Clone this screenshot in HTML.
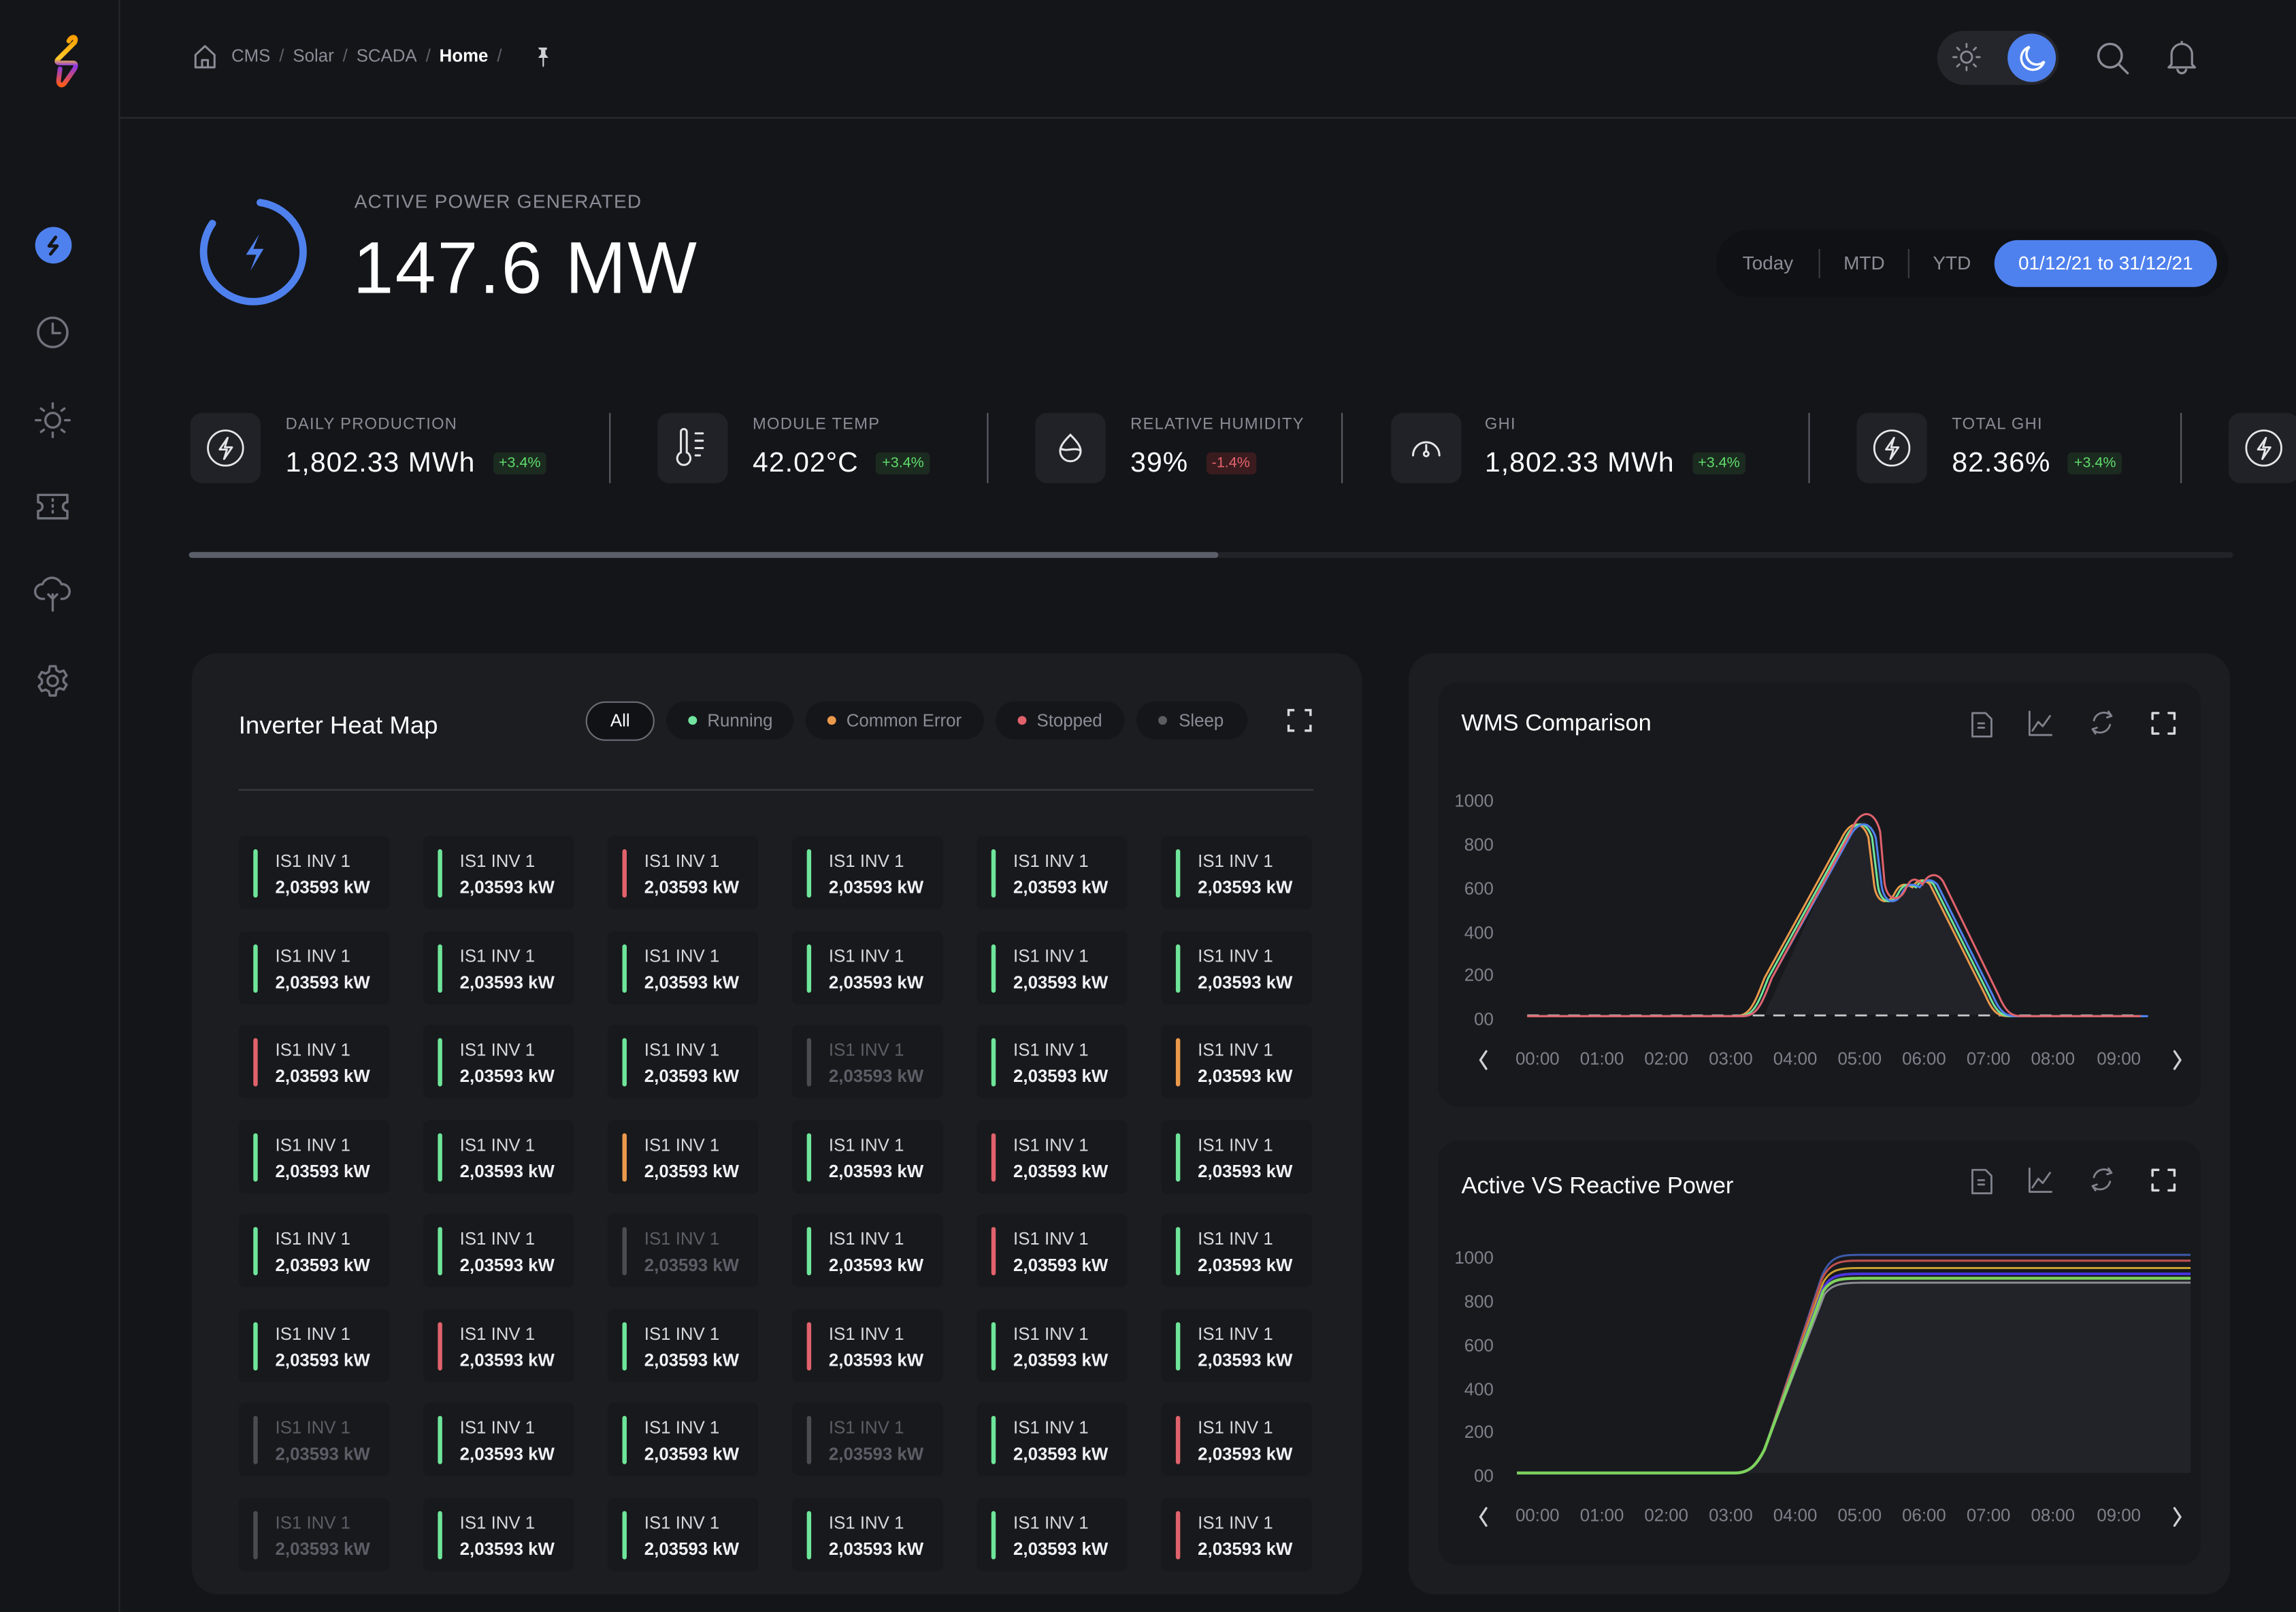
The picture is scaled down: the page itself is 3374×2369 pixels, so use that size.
<!DOCTYPE html>
<html><head><meta charset="utf-8">
<style>
*{margin:0;padding:0;box-sizing:border-box}
html,body{width:3374px;height:2369px;background:#141519;overflow:hidden}
#s{position:absolute;left:0;top:0;width:1568px;height:1101px;transform:scale(2.15179);transform-origin:0 0;background:#141519;font-family:"Liberation Sans",sans-serif;color:#fff}
.a{position:absolute}
.sb{left:0;top:0;width:82px;height:1101px;border-right:1px solid #26272c}
.hd{left:82px;top:80px;width:1486px;height:1px;background:#2a2b30}
.bc{left:158px;top:31px;font-size:12px;color:#8a8d96;white-space:nowrap}
.bc span{margin:0 6px;color:#5f626b}
.kl{font-size:11px;color:#8a8d96;letter-spacing:.6px}
.kv{font-size:19px;color:#fff;letter-spacing:.5px}
.bd{display:inline-block;font-size:10px;padding:2px 4px;border-radius:3px;background:#1c2b20;color:#5fdc6b;vertical-align:3px;margin-left:12px;letter-spacing:0}
.bd.r{background:#3a1c1f;color:#e5646e}
.ib{width:48px;height:48px;background:#212227;border-radius:8px}
.dv{width:1px;height:48px;background:#5a5d66}
.pn{background:#1c1d21;border-radius:18px}
.card{background:#18191d;border-radius:14px}
.chip{height:26px;border-radius:13px;background:#15161a;font-size:12px;color:#8a8d96;line-height:26px;padding-left:14px}
.chip i{position:absolute;left:15px;top:10px;width:6px;height:6px;border-radius:3px}
.t{position:absolute;width:103px;height:50px;background:#18191c;border-radius:4px}
.t i{position:absolute;left:10px;top:9px;width:2.5px;height:33px;border-radius:2px;background:#6ee59a}
.t i.r{background:#e0626c}.t i.o{background:#eb9a4b}.t i.k{background:#4a4c52}
.t b{position:absolute;left:25px;top:10px;font-weight:normal;font-size:12px;color:#d8d9dd;white-space:nowrap}
.t span{position:absolute;left:25px;top:28px;font-weight:bold;font-size:12px;color:#f2f2f4;white-space:nowrap}
.t.d b,.t.d span{color:#5b5e66}
</style></head><body><div id="s">

<div class="a sb"></div>
<div class="a hd"></div>
<!-- logo -->
<svg class="a" style="left:30px;top:22px" width="30" height="40" viewBox="0 0 30 40">
<defs><linearGradient id="lg" x1="0" y1="0" x2="0" y2="1"><stop offset="0" stop-color="#ff9d00"/><stop offset=".45" stop-color="#ffc92a"/><stop offset=".6" stop-color="#8a35e8"/><stop offset="1" stop-color="#ff5a1a"/></linearGradient></defs>
<path d="M17 6 C19 2 23 3 21 7 L10 18 C8 20 9 21 11 21 L20 21 C22 21 22 23 21 25 L14 35 C12 37 10 36 10 33 L11 25" fill="none" stroke="url(#lg)" stroke-width="3.2" stroke-linecap="round" stroke-linejoin="round"/>
</svg>
<!-- nav -->
<div class="a" style="left:24px;top:155px;width:25px;height:25px;border-radius:50%;background:#4f81ee"></div>
<svg class="a" style="left:24px;top:155px" width="25" height="25" viewBox="0 0 25 25"><path d="M14 7 L9.5 13 H15 L10.5 18.5" fill="none" stroke="#15161a" stroke-width="2.2" stroke-linecap="round" stroke-linejoin="round"/></svg>
<svg class="a" style="left:24px;top:215px" width="24" height="24" viewBox="0 0 24 24" fill="none" stroke="#70737c" stroke-width="1.6" stroke-linecap="round"><circle cx="12" cy="12" r="10"/><path d="M12 6v6.5h5"/></svg>
<svg class="a" style="left:23px;top:274px" width="26" height="26" viewBox="0 0 26 26" fill="none" stroke="#70737c" stroke-width="1.6" stroke-linecap="round"><circle cx="13" cy="13" r="5"/><path d="M13 1.5v3M13 21.5v3M1.5 13h3M21.5 13h3M5 5l2 1.5M21 5l-2 1.5M5 21l2-1.5M21 21l-2-1.5"/></svg>
<svg class="a" style="left:24px;top:335px" width="24" height="22" viewBox="0 0 24 22" fill="none" stroke="#70737c" stroke-width="1.6" stroke-linejoin="round"><path d="M2 3h20v5a3 3 0 0 0 0 6v5H2v-5a3 3 0 0 0 0-6z"/><path d="M12 6v1M12 10v1M12 14v1" stroke-linecap="round"/></svg>
<svg class="a" style="left:23px;top:393px" width="26" height="26" viewBox="0 0 26 26" fill="none" stroke="#70737c" stroke-width="1.6" stroke-linecap="round" stroke-linejoin="round"><path d="M7 16H6a5 5 0 0 1 0-10 7 7 0 0 1 13 0 5 5 0 0 1 1 10h-1"/><path d="M13 24V13M10 13l3 3 3-3"/></svg>
<svg class="a" style="left:24px;top:453px" width="24" height="24" viewBox="0 0 24 24" fill="none" stroke="#70737c" stroke-width="1.6" stroke-linejoin="round"><path d="M10 2h4l.6 2.8 2.2 1.2 2.7-1 2 3.4-2.1 1.9v2.4l2.1 1.9-2 3.4-2.7-1-2.2 1.3L14 22h-4l-.6-2.7-2.2-1.3-2.7 1-2-3.4 2.1-1.9V11.3L2.5 9.4l2-3.4 2.7 1 2.2-1.2z"/><circle cx="12" cy="12" r="3.5"/></svg>

<!-- breadcrumb -->
<svg class="a" style="left:132px;top:30px" width="16" height="17" viewBox="0 0 16 17" fill="none" stroke="#8a8d96" stroke-width="1.4" stroke-linejoin="round"><path d="M1.5 7.5 8 1.5l6.5 6V16h-13z"/><path d="M6 16v-5h4v5"/></svg>
<div class="a bc">CMS<span>/</span>Solar<span>/</span>SCADA<span>/</span><b style="color:#fff;font-weight:bold">Home</b><span>/</span></div>
<svg class="a" style="left:366px;top:32px" width="9" height="14" viewBox="0 0 9 14" fill="#d0d0d4"><path d="M1.5 0.5h6v1.5h-1v3l2 2.5h-3v5.5l-0.5 1-0.5-1V7.5h-3l2-2.5V2h-1z"/></svg>

<!-- toggle -->
<div class="a" style="left:1323px;top:21px;width:83px;height:37px;border-radius:19px;background:#25262b"></div>
<div class="a" style="left:1371px;top:23px;width:33px;height:33px;border-radius:50%;background:#4f81ee"></div>
<svg class="a" style="left:1333px;top:29px" width="20" height="20" viewBox="0 0 20 20" fill="none" stroke="#8a8d96" stroke-width="1.3" stroke-linecap="round"><circle cx="10" cy="10" r="3.8"/><path d="M10 1v2.2M10 16.8V19M1 10h2.2M16.8 10H19M3.6 3.6l1.5 1.5M14.9 14.9l1.5 1.5M3.6 16.4l1.5-1.5M14.9 5.1l1.5-1.5"/></svg>
<svg class="a" style="left:1377px;top:29px" width="22" height="22" viewBox="0 0 22 22" fill="none" stroke="#fff" stroke-width="1.6"><path d="M9 3a8 8 0 1 0 10 10A7 7 0 0 1 9 3z"/></svg>
<svg class="a" style="left:1431px;top:28px" width="24" height="24" viewBox="0 0 24 24" fill="none" stroke="#8a8d96" stroke-width="1.6" stroke-linecap="round"><circle cx="10" cy="10" r="8"/><path d="M16 16l6 6"/></svg>
<svg class="a" style="left:1479px;top:27px" width="22" height="24" viewBox="0 0 22 24" fill="none" stroke="#8a8d96" stroke-width="1.5" stroke-linejoin="round"><path d="M11 1v2M4 17V10a7 7 0 0 1 14 0v7l2 2H2z"/><path d="M8 20a3 3 0 0 0 6 0"/></svg>

<!-- active power -->
<svg class="a" style="left:133px;top:132px" width="80" height="80" viewBox="0 0 80 80"><circle cx="40" cy="40" r="34" fill="none" stroke="#4f81ee" stroke-width="5" stroke-linecap="round" stroke-dasharray="176 38" transform="rotate(-82 40 40)"/><path d="M44 28 L35 42 H42 L38 53 L47 38 H40 Z" fill="#4f81ee"/></svg>
<div class="a" style="left:242px;top:130px;font-size:13px;color:#8a8d96;letter-spacing:.6px">ACTIVE POWER GENERATED</div>
<div class="a" style="left:241px;top:154px;font-size:50px;color:#fff;letter-spacing:1px">147.6 MW</div>

<!-- date segmented -->
<div class="a" style="left:1172px;top:157px;width:350px;height:46px;border-radius:23px;background:#101114"></div>
<div class="a" style="left:1190px;top:172px;font-size:13px;color:#8a8d96">Today</div>
<div class="a" style="left:1242px;top:170px;width:1px;height:20px;background:#3a3c42"></div>
<div class="a" style="left:1259px;top:172px;font-size:13px;color:#8a8d96">MTD</div>
<div class="a" style="left:1303px;top:170px;width:1px;height:20px;background:#3a3c42"></div>
<div class="a" style="left:1320px;top:172px;font-size:13px;color:#8a8d96">YTD</div>
<div class="a" style="left:1362px;top:164px;width:152px;height:32px;border-radius:16px;background:#4f81ee;color:#fff;font-size:13px;text-align:center;line-height:32px">01/12/21 to 31/12/21</div>

<!-- KPIs -->
<div class="a ib" style="left:130px;top:282px"></div>
<div class="a ib" style="left:449px;top:282px"></div>
<div class="a ib" style="left:707px;top:282px"></div>
<div class="a ib" style="left:950px;top:282px"></div>
<div class="a ib" style="left:1268px;top:282px"></div>
<div class="a ib" style="left:1522px;top:282px"></div>
<svg class="a" style="left:141px;top:293px" width="26" height="26" viewBox="0 0 26 26" fill="none" stroke="#e6e6e8" stroke-width="1.3" stroke-linejoin="round"><circle cx="13" cy="13" r="12"/><path d="M14.5 6 9 14h5l-2 6.5 5.5-8h-5z"/></svg>
<svg class="a" style="left:1279px;top:293px" width="26" height="26" viewBox="0 0 26 26" fill="none" stroke="#e6e6e8" stroke-width="1.3" stroke-linejoin="round"><circle cx="13" cy="13" r="12"/><path d="M14.5 6 9 14h5l-2 6.5 5.5-8h-5z"/></svg>
<svg class="a" style="left:1533px;top:293px" width="26" height="26" viewBox="0 0 26 26" fill="none" stroke="#e6e6e8" stroke-width="1.3" stroke-linejoin="round"><circle cx="13" cy="13" r="12"/><path d="M14.5 6 9 14h5l-2 6.5 5.5-8h-5z"/></svg>
<svg class="a" style="left:460px;top:292px" width="26" height="28" viewBox="0 0 26 28" fill="none" stroke="#e6e6e8" stroke-width="1.4"><path d="M5 3a2 2 0 0 1 4 0v14a4.5 4.5 0 1 1-4 0z"/><path d="M15 4h5M15 9h5M15 14h5M15 19h3" stroke-linecap="round"/></svg>
<svg class="a" style="left:719px;top:294px" width="24" height="24" viewBox="0 0 24 24" fill="none" stroke="#e6e6e8" stroke-width="1.4"><path d="M12 3c-4 4-7 7.5-7 11a7 7 0 0 0 14 0c0-3.5-3-7-7-11z"/><path d="M5.5 12.5c4 2 9-1 13 1"/></svg>
<svg class="a" style="left:962px;top:294px" width="24" height="24" viewBox="0 0 24 24" fill="none" stroke="#e6e6e8" stroke-width="1.4" stroke-linecap="round"><path d="M3 17a9 9 0 0 1 18 0"/><circle cx="12" cy="16" r="1.6"/><path d="M12 14.4V10"/></svg>

<div class="a" style="left:195px;top:284px"><div class="kl">DAILY PRODUCTION</div><div class="kv" style="margin-top:10px">1,802.33 MWh<span class="bd">+3.4%</span></div></div>
<div class="a" style="left:514px;top:284px"><div class="kl">MODULE TEMP</div><div class="kv" style="margin-top:10px">42.02°C<span class="bd">+3.4%</span></div></div>
<div class="a" style="left:772px;top:284px"><div class="kl">RELATIVE HUMIDITY</div><div class="kv" style="margin-top:10px">39%<span class="bd r">-1.4%</span></div></div>
<div class="a" style="left:1014px;top:284px"><div class="kl">GHI</div><div class="kv" style="margin-top:10px">1,802.33 MWh<span class="bd">+3.4%</span></div></div>
<div class="a" style="left:1333px;top:284px"><div class="kl">TOTAL GHI</div><div class="kv" style="margin-top:10px">82.36%<span class="bd">+3.4%</span></div></div>
<div class="a dv" style="left:416px;top:282px"></div>
<div class="a dv" style="left:674px;top:282px"></div>
<div class="a dv" style="left:916px;top:282px"></div>
<div class="a dv" style="left:1235px;top:282px"></div>
<div class="a dv" style="left:1489px;top:282px"></div>
<div class="a" style="left:129px;top:377px;width:1396px;height:4px;border-radius:2px;background:#222328"></div>
<div class="a" style="left:129px;top:377px;width:703px;height:4px;border-radius:2px;background:#5b5f6a"></div>

<!-- Heat map panel -->
<div class="a pn" style="left:131px;top:446px;width:799px;height:643px"></div>
<div class="a" style="left:163px;top:486px;font-size:17px;color:#fff">Inverter Heat Map</div>
<div class="a" style="left:400px;top:479px;width:47px;height:27px;border-radius:14px;border:1px solid #6a6d76;background:#111215;font-size:12px;color:#fff;text-align:center;line-height:25px">All</div>
<div class="a chip" style="left:455px;top:479px;width:87px;padding-left:28px"><i style="background:#72e49f"></i>Running</div>
<div class="a chip" style="left:550px;top:479px;width:122px;padding-left:28px"><i style="background:#eb9a4b"></i>Common Error</div>
<div class="a chip" style="left:680px;top:479px;width:88px;padding-left:28px"><i style="background:#e0626c"></i>Stopped</div>
<div class="a chip" style="left:776px;top:479px;width:76px;padding-left:29px"><i style="background:#5b5d63"></i>Sleep</div>
<svg class="a" style="left:879px;top:484px" width="17" height="16" viewBox="0 0 17 16" fill="none" stroke="#d9d9dd" stroke-width="1.6"><path d="M1 5V1h4M12 1h4v4M16 11v4h-4M5 15H1v-4"/></svg>
<div class="a" style="left:163px;top:539px;width:734px;height:1px;background:#3a3c42"></div>

<div class="t" style="left:163px;top:571px"><i></i><b>IS1 INV 1</b><span>2,03593 kW</span></div>
<div class="t" style="left:289px;top:571px"><i></i><b>IS1 INV 1</b><span>2,03593 kW</span></div>
<div class="t" style="left:415px;top:571px"><i class="r"></i><b>IS1 INV 1</b><span>2,03593 kW</span></div>
<div class="t" style="left:541px;top:571px"><i></i><b>IS1 INV 1</b><span>2,03593 kW</span></div>
<div class="t" style="left:667px;top:571px"><i></i><b>IS1 INV 1</b><span>2,03593 kW</span></div>
<div class="t" style="left:793px;top:571px"><i></i><b>IS1 INV 1</b><span>2,03593 kW</span></div>

<div class="t" style="left:163px;top:636px"><i></i><b>IS1 INV 1</b><span>2,03593 kW</span></div>
<div class="t" style="left:289px;top:636px"><i></i><b>IS1 INV 1</b><span>2,03593 kW</span></div>
<div class="t" style="left:415px;top:636px"><i></i><b>IS1 INV 1</b><span>2,03593 kW</span></div>
<div class="t" style="left:541px;top:636px"><i></i><b>IS1 INV 1</b><span>2,03593 kW</span></div>
<div class="t" style="left:667px;top:636px"><i></i><b>IS1 INV 1</b><span>2,03593 kW</span></div>
<div class="t" style="left:793px;top:636px"><i></i><b>IS1 INV 1</b><span>2,03593 kW</span></div>

<div class="t" style="left:163px;top:700px"><i class="r"></i><b>IS1 INV 1</b><span>2,03593 kW</span></div>
<div class="t" style="left:289px;top:700px"><i></i><b>IS1 INV 1</b><span>2,03593 kW</span></div>
<div class="t" style="left:415px;top:700px"><i></i><b>IS1 INV 1</b><span>2,03593 kW</span></div>
<div class="t d" style="left:541px;top:700px"><i class="k"></i><b>IS1 INV 1</b><span>2,03593 kW</span></div>
<div class="t" style="left:667px;top:700px"><i></i><b>IS1 INV 1</b><span>2,03593 kW</span></div>
<div class="t" style="left:793px;top:700px"><i class="o"></i><b>IS1 INV 1</b><span>2,03593 kW</span></div>

<div class="t" style="left:163px;top:765px"><i></i><b>IS1 INV 1</b><span>2,03593 kW</span></div>
<div class="t" style="left:289px;top:765px"><i></i><b>IS1 INV 1</b><span>2,03593 kW</span></div>
<div class="t" style="left:415px;top:765px"><i class="o"></i><b>IS1 INV 1</b><span>2,03593 kW</span></div>
<div class="t" style="left:541px;top:765px"><i></i><b>IS1 INV 1</b><span>2,03593 kW</span></div>
<div class="t" style="left:667px;top:765px"><i class="r"></i><b>IS1 INV 1</b><span>2,03593 kW</span></div>
<div class="t" style="left:793px;top:765px"><i></i><b>IS1 INV 1</b><span>2,03593 kW</span></div>

<div class="t" style="left:163px;top:829px"><i></i><b>IS1 INV 1</b><span>2,03593 kW</span></div>
<div class="t" style="left:289px;top:829px"><i></i><b>IS1 INV 1</b><span>2,03593 kW</span></div>
<div class="t d" style="left:415px;top:829px"><i class="k"></i><b>IS1 INV 1</b><span>2,03593 kW</span></div>
<div class="t" style="left:541px;top:829px"><i></i><b>IS1 INV 1</b><span>2,03593 kW</span></div>
<div class="t" style="left:667px;top:829px"><i class="r"></i><b>IS1 INV 1</b><span>2,03593 kW</span></div>
<div class="t" style="left:793px;top:829px"><i></i><b>IS1 INV 1</b><span>2,03593 kW</span></div>

<div class="t" style="left:163px;top:894px"><i></i><b>IS1 INV 1</b><span>2,03593 kW</span></div>
<div class="t" style="left:289px;top:894px"><i class="r"></i><b>IS1 INV 1</b><span>2,03593 kW</span></div>
<div class="t" style="left:415px;top:894px"><i></i><b>IS1 INV 1</b><span>2,03593 kW</span></div>
<div class="t" style="left:541px;top:894px"><i class="r"></i><b>IS1 INV 1</b><span>2,03593 kW</span></div>
<div class="t" style="left:667px;top:894px"><i></i><b>IS1 INV 1</b><span>2,03593 kW</span></div>
<div class="t" style="left:793px;top:894px"><i></i><b>IS1 INV 1</b><span>2,03593 kW</span></div>

<div class="t d" style="left:163px;top:958px"><i class="k"></i><b>IS1 INV 1</b><span>2,03593 kW</span></div>
<div class="t" style="left:289px;top:958px"><i></i><b>IS1 INV 1</b><span>2,03593 kW</span></div>
<div class="t" style="left:415px;top:958px"><i></i><b>IS1 INV 1</b><span>2,03593 kW</span></div>
<div class="t d" style="left:541px;top:958px"><i class="k"></i><b>IS1 INV 1</b><span>2,03593 kW</span></div>
<div class="t" style="left:667px;top:958px"><i></i><b>IS1 INV 1</b><span>2,03593 kW</span></div>
<div class="t" style="left:793px;top:958px"><i class="r"></i><b>IS1 INV 1</b><span>2,03593 kW</span></div>

<div class="t d" style="left:163px;top:1023px"><i class="k"></i><b>IS1 INV 1</b><span>2,03593 kW</span></div>
<div class="t" style="left:289px;top:1023px"><i></i><b>IS1 INV 1</b><span>2,03593 kW</span></div>
<div class="t" style="left:415px;top:1023px"><i></i><b>IS1 INV 1</b><span>2,03593 kW</span></div>
<div class="t" style="left:541px;top:1023px"><i></i><b>IS1 INV 1</b><span>2,03593 kW</span></div>
<div class="t" style="left:667px;top:1023px"><i></i><b>IS1 INV 1</b><span>2,03593 kW</span></div>
<div class="t" style="left:793px;top:1023px"><i class="r"></i><b>IS1 INV 1</b><span>2,03593 kW</span></div>

<!-- right panel -->
<div class="a pn" style="left:962px;top:446px;width:561px;height:643px"></div>
<div class="a card" style="left:982px;top:466px;width:521px;height:290px"></div>
<div class="a card" style="left:982px;top:779px;width:521px;height:290px"></div>
<div class="a" style="left:998px;top:486px;font-size:16px;color:#fff">WMS Comparison</div>
<div class="a" style="left:998px;top:802px;font-size:16px;color:#fff">Active VS Reactive Power</div>

<svg class="a" style="left:0;top:0" width="1568" height="1101" viewBox="0 0 1568 1101">
<g id="ic" fill="none" stroke="#80838c" stroke-width="1.3" stroke-linejoin="round" stroke-linecap="round">
<path d="M1347 487h9l4 4v12h-13z M1351 494h4M1351 497h4"/>
<path d="M1386 486v16h15 M1388 499l4-6 3 3 5-7"/>
<path d="M1442 489a7 7 0 0 0-12 3 M1429 498a7 7 0 0 0 12-3 M1440 486l2 3-3 1 M1431 501l-2-3 3-1"/>
<path d="M1470 491v-4h4M1481 487h4v4M1485 497v4h-4M1474 501h-4v-4" stroke="#d9d9dd" stroke-width="1.6"/>
</g>
<use href="#ic" y="312"/>

<g font-family="Liberation Sans, sans-serif" font-size="12" fill="#7e818a" text-anchor="end">
<text x="1020" y="551">1000</text><text x="1020" y="581">800</text><text x="1020" y="611">600</text><text x="1020" y="641">400</text><text x="1020" y="670">200</text><text x="1020" y="700">00</text>
<text x="1020" y="863">1000</text><text x="1020" y="893">800</text><text x="1020" y="923">600</text><text x="1020" y="953">400</text><text x="1020" y="982">200</text><text x="1020" y="1012">00</text>
</g>
<g font-family="Liberation Sans, sans-serif" font-size="12" fill="#7e818a" text-anchor="middle">
<text x="1050" y="727">00:00</text><text x="1094" y="727">01:00</text><text x="1138" y="727">02:00</text><text x="1182" y="727">03:00</text><text x="1226" y="727">04:00</text><text x="1270" y="727">05:00</text><text x="1314" y="727">06:00</text><text x="1358" y="727">07:00</text><text x="1402" y="727">08:00</text><text x="1447" y="727">09:00</text>
<text x="1050" y="1039">00:00</text><text x="1094" y="1039">01:00</text><text x="1138" y="1039">02:00</text><text x="1182" y="1039">03:00</text><text x="1226" y="1039">04:00</text><text x="1270" y="1039">05:00</text><text x="1314" y="1039">06:00</text><text x="1358" y="1039">07:00</text><text x="1402" y="1039">08:00</text><text x="1447" y="1039">09:00</text>
</g>
<g fill="none" stroke="#d0d1d5" stroke-width="1.5" stroke-linecap="round"><path d="M1015 718l-4 6 4 6M1485 718l4 6-4 6M1015 1030l-4 6 4 6M1485 1030l4 6-4 6"/></g>

<path d="M1205 693 L1262 568 C1268 558 1276 558 1280 570 L1284 605 C1286 618 1294 618 1298 610 C1302 602 1306 604 1310 606 C1314 600 1318 600 1322 604 L1360 680 C1366 693 1370 693 1378 693 Z" fill="#222328"/>
<path d="M1043 693.5H1462" stroke="#c9c9cc" stroke-width="1.3" stroke-dasharray="8 6"/>
<defs><path id="w" d="M1043 694 L1185 694 C1195 694 1198 686 1205 668 L1258 572 C1264 560 1272 560 1276 572 L1280 605 C1282 618 1290 618 1294 610 C1298 602 1302 604 1306 606 C1310 600 1314 600 1318 604 L1356 680 C1362 694 1366 694 1374 694 L1462 694"/></defs>
<g fill="none" stroke-width="1.4">
<use href="#w" x="0" stroke="#eb9a4b"/>
<use href="#w" x="2.5" stroke="#6ee59a"/>
<use href="#w" x="5" stroke="#4f81ee"/>
<path d="M1043 694 L1190 694 C1200 694 1203 686 1210 668 L1264 568 C1270 552 1280 552 1284 568 L1287 603 C1289 616 1297 616 1301 608 C1305 598 1309 600 1313 604 C1317 596 1323 596 1327 602 L1365 680 C1371 694 1375 694 1383 694 L1462 694" stroke="#e0626c"/>
</g>

<path d="M1190 1006 C1198 1006 1202 998 1206 990 L1245 882 C1250 868 1256 872 1270 872 L1496 872 L1496 1006 Z" fill="#222328"/>
<g fill="none" stroke-width="1.4">
<path d="M1036 1006 L1185 1006 C1195 1006 1200 1000 1205 990 L1244 872 C1250 858 1256 857 1270 857 L1496 857" stroke="#3d5aa8"/>
<path d="M1036 1006 L1185 1006 C1195 1006 1200 1000 1205 990 L1244 874 C1250 862 1256 861 1270 861 L1496 861" stroke="#c05050"/>
<path d="M1036 1006 L1185 1006 C1195 1006 1200 1000 1205 990 L1245 876 C1250 867 1256 866 1270 866 L1496 866" stroke="#c9a030"/>
<path d="M1036 1006 L1185 1006 C1195 1006 1200 1000 1205 990 L1245 880 C1250 871 1256 870 1270 870 L1496 870" stroke="#4a35e0" stroke-width="1.8"/>
<path d="M1036 1006 L1185 1006 C1195 1006 1200 1000 1205 990 L1246 884 C1251 877 1258 876 1272 876 L1496 876" stroke="#8a8d94"/>
<path d="M1036 1006 L1185 1006 C1195 1006 1200 1000 1205 990 L1245 882 C1250 874 1256 873 1270 873 L1496 873" stroke="#7ed35e" stroke-width="2"/>
</g>
</svg>

</div></body></html>
